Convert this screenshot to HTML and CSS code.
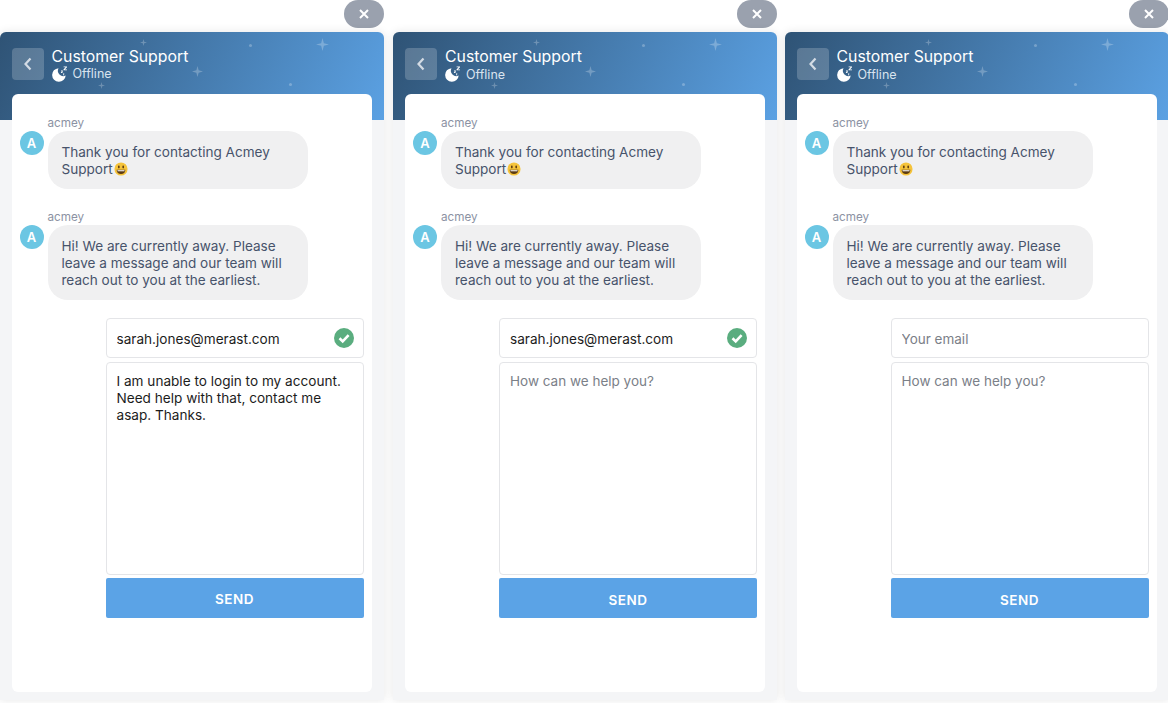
FILE: index.html
```html
<!DOCTYPE html>
<html lang="en">
<head>
    <meta charset="UTF-8">
    <meta name="viewport" content="width=device-width, initial-scale=1.0">
    <title>Customer Support</title>
    <link rel="stylesheet" href="styles.css">
</head>
<body>
    <svg class="defs" width="0" height="0">
        <symbol id="sparkle" viewBox="0 0 24 24"><path d="M12 0 L14.5 9.5 L24 12 L14.5 14.5 L12 24 L9.5 14.5 L0 12 L9.5 9.5 Z"/></symbol>
        <symbol id="moon" viewBox="0 0 16 16">
            <path d="M6.5 2.2 A6.8 6.8 0 1 0 13.7 9.5 A5.4 5.4 0 0 1 6.5 2.2 Z" fill="#fff"/>
            <path d="M11.6 .4 h3.4 v.8 l-2.1 2.2 h2.1 v.9 h-3.5 v-.8 l2.1 -2.2 h-2 Z M9 4.6 h1.9 v.6 l-1 1.2 h1 v.6 h-2 v-.6 l1 -1.2 h-.9 Z M11 7.6 h1.3 v.5 l-.6 .7 h.6 v.5 h-1.3 v-.5 l.6 -.7 h-.6 Z" fill="#fff"/>
        </symbol>
        <symbol id="smiley" viewBox="0 0 16 16">
            <circle cx="8" cy="8" r="7.5" fill="#f5c33b"/>
            <ellipse cx="5.5" cy="5.8" rx="1" ry="1.7" fill="#5b3a12"/>
            <ellipse cx="10.5" cy="5.8" rx="1" ry="1.7" fill="#5b3a12"/>
            <path d="M3 8.8 H13 C13 12 10.8 13.8 8 13.8 C5.2 13.8 3 12 3 8.8 Z" fill="#5b3a12"/>
            <path d="M4 9.4 H12 V10.6 H4 Z" fill="#fff"/>
        </symbol>
    </svg>

    <div class="screens">
        <!-- filled in form -->
        <section class="widget widget-first">
            <button class="close-btn"><svg width="10" height="10" viewBox="0 0 10 10"><path d="M1 1 L9 9 M9 1 L1 9"/></svg></button>
            <div class="panel">
                <header class="panel-header">
                    <svg class="star star-a"><use href="#sparkle"/></svg>
                    <svg class="star star-b"><use href="#sparkle"/></svg>
                    <svg class="star star-c"><use href="#sparkle"/></svg>
                    <svg class="star star-d"><use href="#sparkle"/></svg>
                    <i class="dot dot-a"></i>
                    <i class="dot dot-b"></i>
                    <button class="back-btn"><svg width="8" height="14" viewBox="0 0 8 14"><path d="M6.5 1.5 L1.5 7 L6.5 12.5"/></svg></button>
                    <div class="header-text">
                        <h1>Customer Support</h1>
                        <div class="status"><svg width="16" height="16"><use href="#moon"/></svg><span>Offline</span></div>
                    </div>
                </header>
                <div class="card">
                    <div class="message">
                        <div class="avatar">A</div>
                        <div class="message-body">
                            <div class="sender">acmey</div>
                            <div class="bubble">Thank you for contacting Acmey Support<svg class="emoji" width="14" height="14"><use href="#smiley"/></svg></div>
                        </div>
                    </div>
                    <div class="message">
                        <div class="avatar">A</div>
                        <div class="message-body">
                            <div class="sender">acmey</div>
                            <div class="bubble">Hi! We are currently away. Please leave a message and our team will reach out to you at the earliest.</div>
                        </div>
                    </div>
                    <form class="contact-form">
                        <div class="email-field">
                            <input type="text" placeholder="Your email" value="sarah.jones@merast.com">
                            <svg class="check" width="20" height="20" viewBox="0 0 20 20"><circle cx="10" cy="10" r="10" fill="#5aad7f"/><path d="M5.5 10.3 L8.7 13.4 L14.6 7.2" fill="none" stroke="#fff" stroke-width="2.6"/></svg>
                        </div>
                        <textarea placeholder="How can we help you?">I am unable to login to my account. Need help with that, contact me asap. Thanks.</textarea>
                        <button type="button" class="send-btn">SEND</button>
                    </form>
                </div>
            </div>
        </section>

        <!-- email only -->
        <section class="widget widget-second">
            <button class="close-btn"><svg width="10" height="10" viewBox="0 0 10 10"><path d="M1 1 L9 9 M9 1 L1 9"/></svg></button>
            <div class="panel">
                <header class="panel-header">
                    <svg class="star star-a"><use href="#sparkle"/></svg>
                    <svg class="star star-b"><use href="#sparkle"/></svg>
                    <svg class="star star-c"><use href="#sparkle"/></svg>
                    <svg class="star star-d"><use href="#sparkle"/></svg>
                    <i class="dot dot-a"></i>
                    <i class="dot dot-b"></i>
                    <button class="back-btn"><svg width="8" height="14" viewBox="0 0 8 14"><path d="M6.5 1.5 L1.5 7 L6.5 12.5"/></svg></button>
                    <div class="header-text">
                        <h1>Customer Support</h1>
                        <div class="status"><svg width="16" height="16"><use href="#moon"/></svg><span>Offline</span></div>
                    </div>
                </header>
                <div class="card">
                    <div class="message">
                        <div class="avatar">A</div>
                        <div class="message-body">
                            <div class="sender">acmey</div>
                            <div class="bubble">Thank you for contacting Acmey Support<svg class="emoji" width="14" height="14"><use href="#smiley"/></svg></div>
                        </div>
                    </div>
                    <div class="message">
                        <div class="avatar">A</div>
                        <div class="message-body">
                            <div class="sender">acmey</div>
                            <div class="bubble">Hi! We are currently away. Please leave a message and our team will reach out to you at the earliest.</div>
                        </div>
                    </div>
                    <form class="contact-form">
                        <div class="email-field">
                            <input type="text" placeholder="Your email" value="sarah.jones@merast.com">
                            <svg class="check" width="20" height="20" viewBox="0 0 20 20"><circle cx="10" cy="10" r="10" fill="#5aad7f"/><path d="M5.5 10.3 L8.7 13.4 L14.6 7.2" fill="none" stroke="#fff" stroke-width="2.6"/></svg>
                        </div>
                        <textarea placeholder="How can we help you?"></textarea>
                        <button type="button" class="send-btn">SEND</button>
                    </form>
                </div>
            </div>
        </section>

        <!-- empty form -->
        <section class="widget">
            <button class="close-btn"><svg width="10" height="10" viewBox="0 0 10 10"><path d="M1 1 L9 9 M9 1 L1 9"/></svg></button>
            <div class="panel">
                <header class="panel-header">
                    <svg class="star star-a"><use href="#sparkle"/></svg>
                    <svg class="star star-b"><use href="#sparkle"/></svg>
                    <svg class="star star-c"><use href="#sparkle"/></svg>
                    <svg class="star star-d"><use href="#sparkle"/></svg>
                    <i class="dot dot-a"></i>
                    <i class="dot dot-b"></i>
                    <button class="back-btn"><svg width="8" height="14" viewBox="0 0 8 14"><path d="M6.5 1.5 L1.5 7 L6.5 12.5"/></svg></button>
                    <div class="header-text">
                        <h1>Customer Support</h1>
                        <div class="status"><svg width="16" height="16"><use href="#moon"/></svg><span>Offline</span></div>
                    </div>
                </header>
                <div class="card">
                    <div class="message">
                        <div class="avatar">A</div>
                        <div class="message-body">
                            <div class="sender">acmey</div>
                            <div class="bubble">Thank you for contacting Acmey Support<svg class="emoji" width="14" height="14"><use href="#smiley"/></svg></div>
                        </div>
                    </div>
                    <div class="message">
                        <div class="avatar">A</div>
                        <div class="message-body">
                            <div class="sender">acmey</div>
                            <div class="bubble">Hi! We are currently away. Please leave a message and our team will reach out to you at the earliest.</div>
                        </div>
                    </div>
                    <form class="contact-form">
                        <div class="email-field">
                            <input type="text" placeholder="Your email">
                        </div>
                        <textarea placeholder="How can we help you?"></textarea>
                        <button type="button" class="send-btn">SEND</button>
                    </form>
                </div>
            </div>
        </section>
    </div>
</body>
</html>
```

FILE: styles.css
```css
* {
    margin: 0;
    padding: 0;
    box-sizing: border-box;
}

body {
    font-family: 'Inter', 'Liberation Sans', sans-serif;
    background: white;
    height: 703px;
    overflow: hidden;
}

.defs {
    position: absolute;
}

.screens {
    display: flex;
    width: 1168px;
}

.widget {
    width: 384px;
    margin-right: 8px;
    display: flex;
    flex-direction: column;
    align-items: flex-end;
    flex-shrink: 0;
}

.widget:last-child {
    margin-right: 0;
}

.widget-first {
    margin-top: -0.5px;
    margin-left: -0.5px;
    margin-right: 9.5px;
}

.widget-second {
    margin-right: 7.5px;
}

.close-btn {
    width: 40px;
    height: 28px;
    margin-bottom: 4px;
    border: none;
    border-radius: 14px;
    background: #9aa1ae;
    display: flex;
    align-items: center;
    justify-content: center;
}

.close-btn path {
    stroke: white;
    stroke-width: 2;
    fill: none;
}

.panel {
    width: 100%;
    height: 668px;
    background: #f4f5f7;
    border-radius: 6px 6px 0 0;
    box-shadow: 0 0 10px rgba(0, 0, 0, 0.1);
}

.panel-header {
    position: relative;
    height: 88px;
    padding: 16px 12px 0;
    display: flex;
    align-items: flex-start;
    gap: 8px;
    border-radius: 6px 6px 0 0;
    background: linear-gradient(115deg, #2f5375 0%, #5ba1e3 100%);
    color: white;
    overflow: hidden;
}

.star {
    position: absolute;
    fill: rgba(255, 255, 255, 0.25);
}

.star-a { left: 140px; top: 7px; width: 7px; height: 7px; }
.star-b { left: 192px; top: 34px; width: 11px; height: 11px; }
.star-c { left: 98px; top: 50px; width: 7px; height: 7px; }
.star-d { left: 316px; top: 6px; width: 13px; height: 13px; }

.dot {
    position: absolute;
    width: 3px;
    height: 3px;
    border-radius: 50%;
    background: rgba(255, 255, 255, 0.25);
}

.dot-a { left: 249px; top: 12px; }
.dot-b { left: 289px; top: 51px; }

.back-btn {
    width: 32px;
    height: 32px;
    border: none;
    border-radius: 4px;
    background: rgba(255, 255, 255, 0.2);
    display: flex;
    align-items: center;
    justify-content: center;
    flex-shrink: 0;
}

.back-btn path {
    stroke: #d3dbe4;
    stroke-width: 2.2;
    fill: none;
}

.header-text h1 {
    font-size: 15.8px;
    font-weight: 400;
    line-height: 18px;
}

.status {
    display: flex;
    align-items: center;
    gap: 5px;
    font-size: 12.5px;
    color: #d9e3ee;
}

.card {
    position: relative;
    margin: -26px 12px 0;
    height: 598px;
    padding: 20px 8px 0;
    background: white;
    border-radius: 6px;
}

.message {
    display: flex;
    gap: 4px;
    margin-bottom: 19px;
}

.avatar {
    width: 24px;
    height: 24px;
    margin-top: 17px;
    border-radius: 50%;
    background: #6bc6e3;
    color: white;
    font-size: 13px;
    font-weight: 600;
    line-height: 24px;
    text-align: center;
    flex-shrink: 0;
}

.sender {
    height: 17px;
    font-size: 11.7px;
    line-height: 19px;
    color: #8c92a3;
}

.bubble {
    width: 260px;
    padding: 13px 14px 11px;
    border-radius: 20px;
    background: #f0f0f1;
    color: #47536b;
    font-size: 13.55px;
    line-height: 17px;
}

.emoji {
    vertical-align: -2px;
    margin-left: 1px;
}

.contact-form {
    width: 258px;
    margin-top: -1px;
    margin-left: 86px;
    display: flex;
    flex-direction: column;
    gap: 4px;
}

.email-field {
    position: relative;
}

.email-field input,
.contact-form textarea {
    display: block;
    width: 100%;
    border: 1px solid #e4e5e8;
    border-radius: 4px;
    background: white;
    padding: 0 10px;
    font-family: inherit;
    font-size: 13.6px;
    line-height: 17px;
    color: #1c1c1c;
    outline: none;
}

.email-field input {
    height: 40px;
    padding-top: 2px;
}

.contact-form textarea {
    height: 213px;
    padding-top: 10px;
    resize: none;
}

.email-field input::placeholder,
.contact-form textarea::placeholder {
    color: #7b8088;
    font-size: 13.5px;
    opacity: 1;
}

.check {
    position: absolute;
    right: 10px;
    top: 10px;
}

.send-btn {
    height: 40px;
    margin-top: -1px;
    padding-top: 3px;
    border: none;
    border-radius: 2px;
    background: #5ba3e6;
    color: white;
    font-family: inherit;
    font-size: 13.5px;
    font-weight: 600;
    letter-spacing: 0.5px;
}
```
